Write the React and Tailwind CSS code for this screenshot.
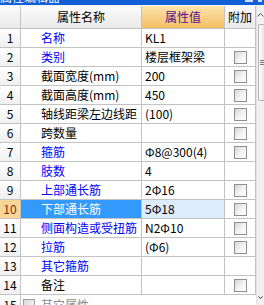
import React from 'react';

const rows = [
  { n: 1, name: '名称', blue: true, value: 'KL1', check: false },
  { n: 2, name: '类别', blue: true, value: '楼层框架梁', check: true },
  { n: 3, name: '截面宽度(mm)', value: '200', check: true },
  { n: 4, name: '截面高度(mm)', value: '450', check: true },
  { n: 5, name: '轴线距梁左边线距', value: '(100)', check: true },
  { n: 6, name: '跨数量', value: '', check: true },
  { n: 7, name: '箍筋', blue: true, value: 'Φ8@300(4)', check: true },
  { n: 8, name: '肢数', blue: true, value: '4', check: false },
  { n: 9, name: '上部通长筋', blue: true, value: '2Φ16', check: true },
  { n: 10, name: '下部通长筋', blue: true, value: '5Φ18', check: true, selected: true },
  { n: 11, name: '侧面构造或受扭筋', blue: true, value: 'N2Φ10', check: true },
  { n: 12, name: '拉筋', blue: true, value: '(Φ6)', check: true },
  { n: 13, name: '其它箍筋', blue: true, value: '', check: false },
  { n: 14, name: '备注', value: '', check: true },
];

const Checkbox = () => (
  <div className="w-[13px] h-[13px] border border-[#8e8f8f] bg-gradient-to-br from-[#d6d6d6] via-[#f2f2f2] to-white" />
);

const Row = ({ row }) => {
  const { n, name, blue, value, check, selected } = row;
  return (
    <div className="grid grid-cols-[21px_121px_83px_31px] h-[19px]">
      <div
        className={`flex items-center justify-center border-r border-b border-[#c3c3c3] ${
          selected ? 'bg-[#f9d596] text-[#7a2a10]' : 'bg-gradient-to-b from-white to-[#f0f0f0] text-black'
        }`}
      >
        {n}
      </div>
      <div
        className={`flex items-center pl-[20px] whitespace-nowrap overflow-hidden border-r border-b border-[#c3c3c3] ${
          selected ? 'bg-[#3399fa] text-white' : blue ? 'text-[#0000ff]' : 'text-black'
        }`}
      >
        {name}
      </div>
      <div
        className={`flex items-center pl-[3px] whitespace-nowrap overflow-hidden border-r border-b border-[#c3c3c3] text-black ${
          selected ? 'bg-[#dcecfd]' : ''
        }`}
      >
        {value}
      </div>
      <div className="flex items-center justify-center border-r border-b border-[#c3c3c3]">
        {check && <Checkbox />}
      </div>
    </div>
  );
};

const ScrollBar = () => (
  <div className="w-[8px] h-[300px] flex flex-col bg-[#f1f1f1] border-l border-[#e2e2e2] overflow-hidden">
    <div className="h-[19px] flex items-center justify-center">
      <svg width="7" height="4" viewBox="0 0 7 4">
        <path d="M0.5 3.5 L3.5 0.5 L6.5 3.5" fill="none" stroke="#4d4d4d" strokeWidth="1" />
      </svg>
    </div>
    <div className="h-[77px] ml-[1px] border border-r-0 border-[#b5b5b5] rounded-l-[2px] bg-gradient-to-r from-white to-[#e6e6e6] flex flex-col items-center justify-center gap-[1px]">
      <div className="w-[4px] h-[1px] bg-[#7a7a7a]" />
      <div className="w-[4px] h-[1px] bg-[#7a7a7a]" />
      <div className="w-[4px] h-[1px] bg-[#7a7a7a]" />
    </div>
    <div className="flex-1" />
    <div className="h-[14px] flex items-start justify-end pr-[1px] pt-[5px]">
      <svg width="5" height="3" viewBox="0 0 5 3">
        <path d="M0.5 0.5 L2.5 2.5 L4.5 0.5" fill="none" stroke="#333" strokeWidth="1" />
      </svg>
    </div>
  </div>
);

export default function App() {
  return (
    <div className="w-[264px] h-[305px] overflow-hidden bg-white text-[12px] leading-[18px] font-['Noto_Sans_CJK_SC','Liberation_Sans',sans-serif]">
      <div className="h-[5px] bg-[#1160d8] overflow-hidden flex justify-between">
        <div className="-mt-[10px] text-white leading-[14px]">属性编辑器</div>
        <div className="flex gap-[5px] pr-[2px]">
          <div className="w-[8px] h-[2px] bg-[#cfe0fb]" />
          <div className="w-[4px] h-[2px] bg-[#cfe0fb]" />
        </div>
      </div>
      <div className="flex">
        <div className="w-[256px]">
          <div className="grid grid-cols-[21px_121px_83px_31px] h-[24px] border-t border-[#f4f4f4]">
            <div className="border-r border-b border-[#c3c3c3] bg-gradient-to-b from-[#fcfcfc] to-[#e9e9e9]" />
            <div className="flex items-center justify-center border-r border-b border-[#c3c3c3] bg-gradient-to-b from-[#fcfcfc] to-[#e9e9e9] text-black">
              属性名称
            </div>
            <div className="flex items-center justify-center border-r border-b border-[#c3c3c3] bg-gradient-to-b from-[#fce2ab] to-[#f2c064] text-[#5a0c8c]">
              属性值
            </div>
            <div className="flex items-center justify-center border-r border-b border-[#c3c3c3] bg-gradient-to-b from-[#fcfcfc] to-[#e9e9e9] text-black">
              附加
            </div>
          </div>
          {rows.map((row) => (
            <Row key={row.n} row={row} />
          ))}
          <div className="grid grid-cols-[21px_235px] h-[19px]">
            <div className="flex items-center justify-center border-r border-[#c3c3c3] bg-gradient-to-b from-white to-[#f0f0f0] text-black">
              15
            </div>
            <div className="flex items-center pl-[2px] gap-[6px] text-[#8a8a8a]">
              <div className="w-[12px] h-[12px] border border-[#9a9a9a] bg-gradient-to-br from-[#d8d8d8] to-white" />
              <span>其它属性</span>
            </div>
          </div>
        </div>
        <ScrollBar />
      </div>
    </div>
  );
}
